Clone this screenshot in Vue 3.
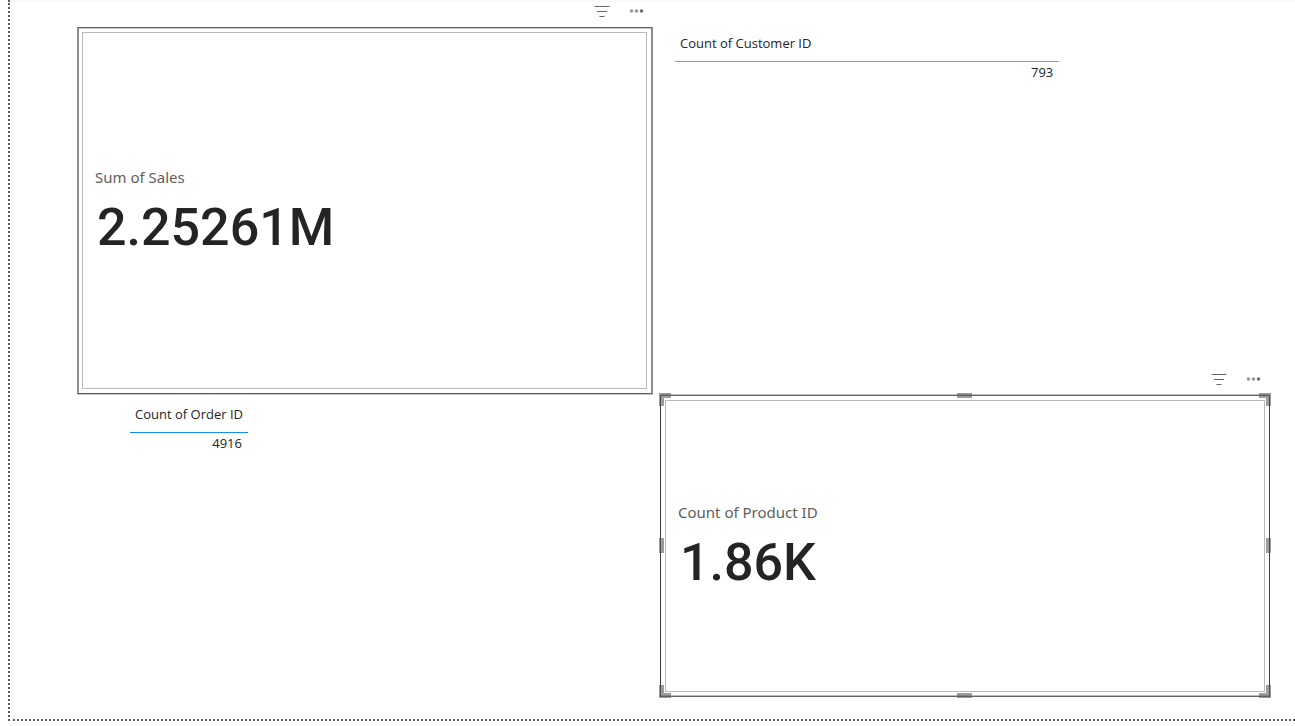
<script setup>
const cards = {
  sales: { label: 'Sum of Sales', value: '2.25261M' },
  products: { label: 'Count of Product ID', value: '1.86K' },
}
const tables = {
  customers: { label: 'Count of Customer ID', value: '793' },
  orders: { label: 'Count of Order ID', value: '4916' },
}
const handles = ['nw', 'n', 'ne', 'w', 'e', 'sw', 's', 'se']
</script>

<template>
  <main class="canvas">
    <div class="column">
      <section class="visual">
        <header class="tools">
          <button type="button" aria-label="Filters">
            <svg width="16" height="12" viewBox="0 0 16 12"><path d="M0.500 1.500h15M3 6.500h10M5.500 11.500h5" /></svg>
          </button>
          <button type="button" aria-label="More options">
            <svg class="dots" width="16" height="12" viewBox="0 0 16 12">
              <circle cx="2.500" cy="6" r="1.800" /><circle cx="7.500" cy="6" r="1.800" /><circle class="strong" cx="12.500" cy="6" r="1.800" />
            </svg>
          </button>
        </header>
        <div class="card sales">
          <div class="inner">
            <div class="label">{{ cards.sales.label }}</div>
            <div class="value">{{ cards.sales.value }}</div>
          </div>
        </div>
      </section>
      <table class="orders">
        <thead><tr><th scope="col">{{ tables.orders.label }}</th></tr></thead>
        <tbody><tr><td>{{ tables.orders.value }}</td></tr></tbody>
      </table>
    </div>

    <div class="column right">
      <table class="customers">
        <thead><tr><th scope="col">{{ tables.customers.label }}</th></tr></thead>
        <tbody><tr><td>{{ tables.customers.value }}</td></tr></tbody>
      </table>
      <section class="visual">
        <header class="tools">
          <button type="button" aria-label="Filters">
            <svg width="16" height="12" viewBox="0 0 16 12"><path d="M0.500 1.500h15M3 6.500h10M5.500 11.500h5" /></svg>
          </button>
          <button type="button" aria-label="More options">
            <svg class="dots" width="16" height="12" viewBox="0 0 16 12">
              <circle cx="2.500" cy="6" r="1.800" /><circle cx="7.500" cy="6" r="1.800" /><circle class="strong" cx="12.500" cy="6" r="1.800" />
            </svg>
          </button>
        </header>
        <div class="card products">
          <div class="inner">
            <div class="label">{{ cards.products.label }}</div>
            <div class="value">{{ cards.products.value }}</div>
          </div>
          <span v-for="h in handles" :key="h" class="handle" :class="h"></span>
        </div>
      </section>
    </div>
  </main>
</template>

<style>
body {
  background: #fff;
}
</style>

<style scoped>
.canvas {
  box-sizing: border-box;
  min-height: calc(100vh - 5px);
  margin-left: 8px;
  padding: 0 25px 22px 67px;
  border-left: 2px dotted #5c5c5c;
  border-bottom: 2px dotted #5c5c5c;
  background: linear-gradient(#f8f8f8, #fff 3px) no-repeat;
  display: grid;
  grid-template-columns: 576fr 610fr;
  column-gap: 7px;
  font-family: "Open Sans", "Noto Sans", sans-serif;
  color: #252423;
}
.column {
  display: flex;
  flex-direction: column;
  align-items: flex-start;
}
.right {
  justify-content: space-between;
}
.visual {
  width: 100%;
}
.tools {
  display: flex;
  justify-content: flex-end;
  gap: 11px;
  height: 27px;
  padding-right: 4px;
}
.tools button {
  width: 24px;
  height: 22px;
  padding: 0;
  border: 0;
  background: none;
  display: flex;
  align-items: center;
  justify-content: center;
}
.tools path {
  fill: none;
  stroke: #666;
  stroke-width: 1;
}
.dots circle {
  fill: #999;
}
.dots .strong {
  fill: #6e6e6e;
}
.card {
  position: relative;
  box-sizing: border-box;
  display: flex;
}
.sales {
  min-height: 367px;
  padding: 4px 4px 4px 3px;
  border: 1px solid #5f5f5f;
  border-left: 2px solid #8e8e8e;
  border-right: 2px solid #8e8e8e;
  box-shadow: inset 0 1px #c4c4c4, 0 1px #c4c4c4;
}
.products {
  min-height: 302px;
  padding: 4px;
  border: 1px solid #3c3c3c;
  border-top-color: #666;
  border-bottom-color: #666;
  box-shadow: 0 -1px #bdbdbd, inset 0 -1px #bdbdbd;
}
.inner {
  flex: 1;
  display: flex;
  flex-direction: column;
  justify-content: center;
  padding: 12px 12px 0;
  border: 1px solid #b9b9b9;
}
.label {
  font-family: "Noto Sans", "Open Sans", sans-serif;
  font-size: 15px;
  line-height: 22px;
  color: #605e5c;
}
.value {
  padding-left: 2px;
  font-family: Roboto, "Liberation Sans", sans-serif;
  font-weight: 500;
  font-size: 52px;
  line-height: 80px;
}
table {
  border-collapse: separate;
  border-spacing: 0;
  font-size: 13px;
  line-height: 18px;
}
th {
  font-weight: 400;
  text-align: left;
  padding: 0 5px 9px;
  border-bottom: 1px solid #118dff;
}
td {
  text-align: right;
  padding: 1px 6px 0 0;
}
.orders {
  margin: 11px 0 0 53px;
}
.customers {
  width: 63%;
  margin: 34px 0 0 15px;
}
.customers th {
  border-bottom-color: #4fb3f8;
}
.handle {
  position: absolute;
  box-sizing: border-box;
  width: 12px;
  height: 13px;
  border: 0 solid rgba(90, 90, 90, 0.6);
}
.nw { left: -2px; top: -3px; border-width: 5px 0 0 5px; }
.ne { right: -2px; top: -3px; border-width: 5px 5px 0 0; }
.sw { left: -2px; bottom: -2px; border-width: 0 0 5px 5px; }
.se { right: -2px; bottom: -2px; border-width: 0 5px 5px 0; }
.n, .s { left: calc(50% - 8px); width: 15px; height: 5px; border-width: 5px 0 0; }
.n { top: -3px; }
.s { bottom: -2px; }
.w, .e { top: calc(50% - 8px); width: 5px; height: 15px; border-width: 0 0 0 5px; }
.w { left: -2px; }
.e { right: -2px; }
</style>
